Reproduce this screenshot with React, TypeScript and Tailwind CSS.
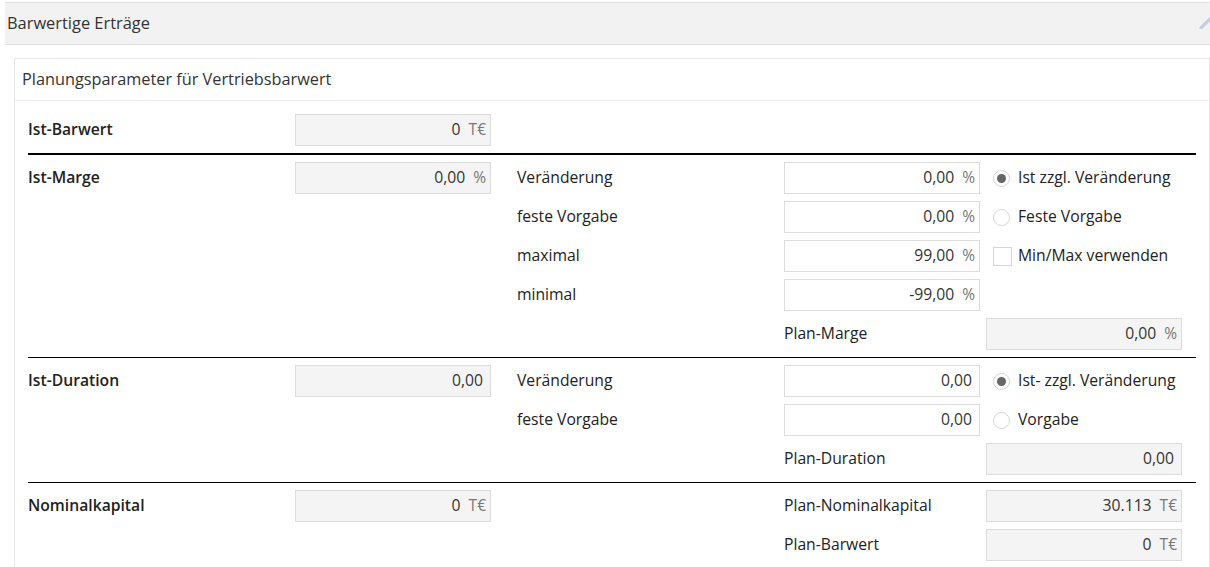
import type { ReactNode } from "react";

const font = { fontFamily: '"Open Sans", "Liberation Sans", sans-serif' };

function Field({
  value,
  unit,
  readOnly,
  className = "",
}: {
  value: string;
  unit?: string;
  readOnly?: boolean;
  className?: string;
}) {
  return (
    <div
      className={`flex h-8 w-[196px] items-center justify-end border border-[#dcdcdc] text-[15.7px] text-[#333] ${
        readOnly ? "bg-[#f4f4f4]" : "bg-white"
      } ${unit ? "pr-[4px]" : "pr-[7px]"} ${className}`}
    >
      <span>{value}</span>
      {unit && <span className="ml-[8px] text-[15.5px] text-[#777]">{unit}</span>}
    </div>
  );
}

function Label({ children, bold, className = "" }: { children: ReactNode; bold?: boolean; className?: string }) {
  return (
    <div
      className={`flex h-8 items-center text-[15.7px] text-[#222] ${bold ? "font-semibold" : ""} ${className}`}
    >
      {children}
    </div>
  );
}

function Radio({ label, checked }: { label: string; checked?: boolean }) {
  return (
    <div className="flex h-8 items-center pl-[13px] text-[15.7px] text-[#222]">
      <span className="mr-[8px] flex h-[17px] w-[17px] items-center justify-center rounded-full border border-[#d6d6d6] bg-white">
        {checked && <span className="h-[9px] w-[9px] rounded-full bg-[#666]" />}
      </span>
      {label}
    </div>
  );
}

function Check({ label }: { label: string }) {
  return (
    <div className="flex h-8 items-center pl-[13px] text-[15.7px] text-[#222]">
      <span className="mr-[6px] h-[19px] w-[19px] border border-[#d6d6d6] bg-white" />
      {label}
    </div>
  );
}

function Section({ children, border }: { children: ReactNode; border?: "thick" | "thin" }) {
  const b = border === "thick" ? "border-t-2 border-black" : border === "thin" ? "border-t border-black" : "";
  return (
    <div className={`grid grid-cols-[267px_196px_26px_267px_196px_1fr] gap-y-[7px] py-[7px] ${b}`}>
      {children}
    </div>
  );
}

export default function App() {
  return (
    <div className="h-[567px] w-[1210px] overflow-hidden bg-white pl-[5px] pt-[2px]" style={font}>
      <div className="flex h-[43px] w-[1215px] items-center border-y border-[#e0e0e0] bg-[#f2f2f2] pl-[2px] text-[16.4px] text-[#333]">
        <span>Barwertige Erträge</span>
        <svg viewBox="0 0 22 12" className="ml-auto mr-[-1px] h-[12px] w-[22px] -translate-y-[1px]">
          <path d="M2 11 L11 2 L20 11" fill="none" stroke="#c3d0dd" strokeWidth="3.2" strokeLinecap="round" />
        </svg>
      </div>

      <div className="ml-[9px] mt-[13px] w-[1196px] border border-[#e6e6e6]">
        <div className="flex h-[42px] items-center border-b border-[#f0f0f0] pl-[7px] text-[16.3px] text-[#333]">
          Planungsparameter für Vertriebsbarwert
        </div>
        <div className="px-[13px] pt-[6px]">
          <Section>
            <Label bold>Ist-Barwert</Label>
            <Field value="0" unit="T€" readOnly />
          </Section>

          <Section border="thick">
            <Label bold>Ist-Marge</Label>
            <Field value="0,00" unit="%" readOnly />
            <div />
            <Label>Veränderung</Label>
            <Field value="0,00" unit="%" />
            <Radio label="Ist zzgl. Veränderung" checked />

            <Label className="col-start-4">feste Vorgabe</Label>
            <Field value="0,00" unit="%" />
            <Radio label="Feste Vorgabe" />

            <Label className="col-start-4">maximal</Label>
            <Field value="99,00" unit="%" />
            <Check label="Min/Max verwenden" />

            <Label className="col-start-4">minimal</Label>
            <Field value="-99,00" unit="%" />
            <div />

            <Label className="col-start-5">Plan-Marge</Label>
            <Field value="0,00" unit="%" readOnly className="ml-[6px]" />
          </Section>

          <Section border="thin">
            <Label bold>Ist-Duration</Label>
            <Field value="0,00" readOnly />
            <div />
            <Label>Veränderung</Label>
            <Field value="0,00" />
            <Radio label="Ist- zzgl. Veränderung" checked />

            <Label className="col-start-4">feste Vorgabe</Label>
            <Field value="0,00" />
            <Radio label="Vorgabe" />

            <Label className="col-start-5">Plan-Duration</Label>
            <Field value="0,00" readOnly className="ml-[6px]" />
          </Section>

          <Section border="thin">
            <Label bold>Nominalkapital</Label>
            <Field value="0" unit="T€" readOnly />
            <div />
            <div />
            <Label>Plan-Nominalkapital</Label>
            <Field value="30.113" unit="T€" readOnly className="ml-[6px]" />

            <Label className="col-start-5">Plan-Barwert</Label>
            <Field value="0" unit="T€" readOnly className="ml-[6px]" />
          </Section>
        </div>
      </div>
    </div>
  );
}
